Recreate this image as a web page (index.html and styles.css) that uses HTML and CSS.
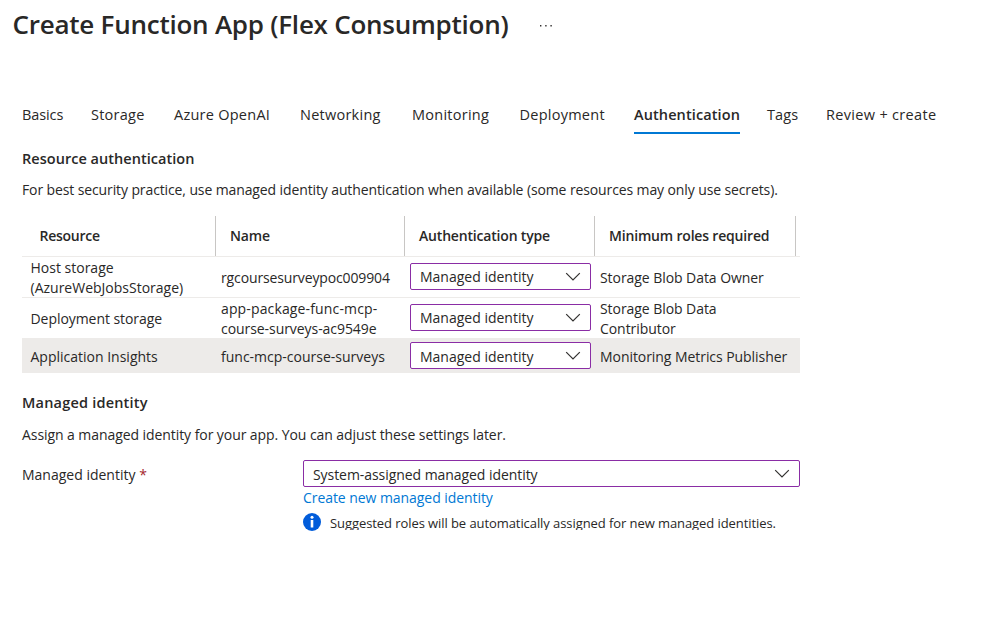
FILE: index.html
```html
<!DOCTYPE html>
<html lang="en">
<head>
<meta charset="utf-8">
<title>Create Function App (Flex Consumption)</title>
<link rel="stylesheet" href="styles.css">
</head>
<body>
<header class="header">
  <h1 class="title">Create Function App (Flex Consumption)</h1>
  <svg class="more" width="14" height="4" viewBox="0 0 14 4"><path d="M1 1h1.400v1.400H1zM6.200 1h1.400v1.400H6.200zM11.400 1h1.400v1.400h-1.400z" fill="#323130"/></svg>
</header>
<nav class="tabs">
  <a class="tab t-basics">Basics</a><a class="tab">Storage</a><a class="tab">Azure OpenAI</a><a class="tab">Networking</a><a class="tab">Monitoring</a><a class="tab">Deployment</a><a class="tab active">Authentication</a><a class="tab t-tags">Tags</a><a class="tab t-review">Review + create</a>
</nav>
<main class="content">
  <h2 class="heading">Resource authentication</h2>
  <p class="text intro">For best security practice, use managed identity authentication when available (some resources may only use secrets).</p>
  <div class="table">
    <div class="row head">
      <div class="th th-first">Resource</div><div class="th">Name</div><div class="th">Authentication type</div><div class="th">Minimum roles required</div>
    </div>
    <div class="row tall">
      <div class="td"><span>Host storage<br>(AzureWebJobsStorage)</span></div>
      <div class="td"><span class="s-rg">rgcoursesurveypoc009904</span></div>
      <div class="cell"><div class="select"><span>Managed identity</span><svg class="chev" width="16" height="10" viewBox="0 0 16 10"><path d="M1.200 1.200 8 8l6.800-6.800"/></svg></div></div>
      <div class="td"><span class="s-role">Storage Blob Data Owner</span></div>
    </div>
    <div class="row tall">
      <div class="td"><span class="s-role">Deployment storage</span></div>
      <div class="td"><span><span class="s-app">app-package-func-mcp-</span><br><span class="s-role">course-surveys-ac9549e</span></span></div>
      <div class="cell"><div class="select"><span>Managed identity</span><svg class="chev" width="16" height="10" viewBox="0 0 16 10"><path d="M1.200 1.200 8 8l6.800-6.800"/></svg></div></div>
      <div class="td"><span class="s-role">Storage Blob Data<br>Contributor</span></div>
    </div>
    <div class="row selected">
      <div class="td"><span>Application Insights</span></div>
      <div class="td"><span>func-mcp-course-surveys</span></div>
      <div class="cell"><div class="select low"><span>Managed identity</span><svg class="chev" width="16" height="10" viewBox="0 0 16 10"><path d="M1.200 1.200 8 8l6.800-6.800"/></svg></div></div>
      <div class="td"><span class="s-role">Monitoring Metrics Publisher</span></div>
    </div>
  </div>
  <h2 class="heading h-managed">Managed identity</h2>
  <p class="text assign">Assign a managed identity for your app. You can adjust these settings later.</p>
  <div class="field">
    <label class="label">Managed identity <span class="req">*</span></label>
    <div class="control">
      <div class="select wide low"><span class="s-role">System-assigned managed identity</span><svg class="chev" width="16" height="10" viewBox="0 0 16 10"><path d="M1.200 1.200 8 8l6.800-6.800"/></svg></div>
      <a class="link">Create new managed identity</a>
      <div class="info">
        <svg width="18" height="18" viewBox="0 0 18 18"><circle cx="9" cy="9" r="9" fill="#015cda"/><circle cx="9" cy="4.300" r="1.500" fill="#fff"/><path d="M7.700 7h2.600v7.500H7.700z" fill="#fff"/></svg>
        <span class="note">Suggested roles will be automatically assigned for new managed identities.</span>
      </div>
    </div>
  </div>
</main>
</body>
</html>
```
FILE: styles.css
```css
* { box-sizing: border-box; }
body {
  margin: 0;
  background: #fff;
  color: #292827;
  font: 14px/20px "Open Sans", "Noto Sans", sans-serif;
  white-space: nowrap;
}
h1, h2, p { margin: 0; }
.header { display: flex; align-items: center; height: 50px; padding-left: 12.500px; }
.title { width: 526px; font-size: 26px; line-height: 34px; padding-bottom: 2px; font-weight: 600; letter-spacing: -0.240px; }
.more { margin-top: 2px; }
.tabs {
  display: grid;
  grid-template-columns: 69px 83px 126px 112px 107.500px 114.500px 133px 59px 130px;
  justify-items: start;
  margin: 50px 0 0 22px;
  height: 34px;
  font-size: 14.500px;
  letter-spacing: 0.250px;
}
.tab { height: 34px; line-height: 29px; }
.t-basics { letter-spacing: -0.100px; }
.t-tags { letter-spacing: 0.100px; }
.t-review { letter-spacing: 0.320px; }
.active { font-weight: 600; letter-spacing: 0.100px; border-bottom: 2px solid #0078d4; }
.content { padding: 15px 0 0 22px; }
.heading { font-size: 14.500px; line-height: 20px; font-weight: 600; letter-spacing: 0.030px; }
.text { line-height: 20px; }
.intro { margin-top: 11px; letter-spacing: -0.114px; }
.table { width: 778px; margin-top: 16px; }
.row { display: grid; grid-template-columns: 190.500px 189px 190px 208px; border-bottom: 1px solid #edebe9; }
.head { grid-template-columns: 194px 189px 190px 201px; height: 41px; letter-spacing: -0.180px; }
.th { display: flex; align-items: center; font-weight: 600; padding-left: 14px; border-right: 1px solid #c8c6c4; }
.th-first { padding-left: 17.500px; letter-spacing: -0.250px; }
.tall { height: 41px; }
.selected { height: 34px; background: #edebe9; border-bottom: 0; }
.td { display: flex; align-items: center; padding: 1px 0 0 8.500px; }
.tall .td { height: 41px; }
.selected .td { padding-top: 2px; }
.cell { display: flex; align-items: flex-start; padding: 6px 0 0 8.500px; }
.selected .cell { padding-top: 3px; }
.select {
  display: flex; align-items: center; justify-content: space-between;
  width: 181px; height: 27px; padding: 0 9px;
  background: #fff; border: 1px solid #8a2da5; border-radius: 2px;
}
.low span { padding-top: 2px; }
.chev { fill: none; stroke: #323130; stroke-width: 1.200; }
.s-role { letter-spacing: -0.060px; }
.s-rg { letter-spacing: -0.130px; }
.s-app { letter-spacing: 0.140px; }
.h-managed { margin-top: 20px; letter-spacing: 0.200px; }
.assign { margin-top: 12px; letter-spacing: -0.070px; }
.field { display: grid; grid-template-columns: 281px 497px; margin-top: 15px; }
.label { line-height: 29px; }
.req { color: #a4262c; }
.wide { width: 497px; }
.link { display: block; color: #0078d4; line-height: 22px; letter-spacing: -0.060px; }
.info { display: flex; gap: 9px; margin-top: 4px; height: 18px; }
.info svg { flex: none; }
.note { font-size: 13px; line-height: 20px; height: 17px; overflow: hidden; letter-spacing: -0.075px; }
```
